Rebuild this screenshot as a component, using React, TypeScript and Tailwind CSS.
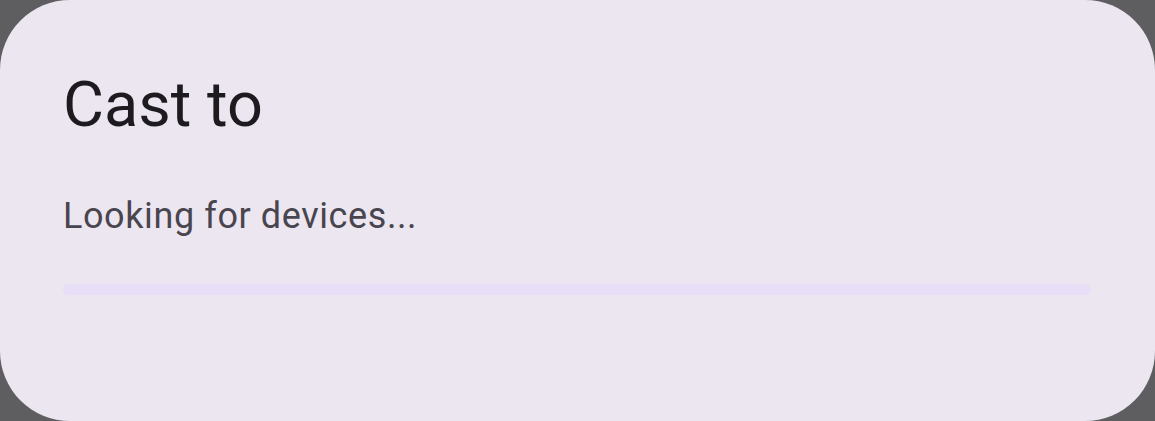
export default function App() {
  return (
    <div className="w-[1155px] h-[421px] bg-[#5e5d60] overflow-hidden" style={{ fontFamily: "Roboto, sans-serif" }}>
      <div className="w-full h-full bg-[#ece6f0] rounded-[70px] pl-[63px] pr-[64px] pt-[70px]">
        <h1 className="text-[63px] leading-[70px] text-[#1d1b20] font-normal">Cast to</h1>
        <p className="mt-[56px] text-[36px] leading-[40px] tracking-[0.6px] text-[#49454f]">Looking for devices...</p>
        <div className="mt-[48px] h-[11px] w-[1028px] rounded-full bg-[#e8def8]" />
      </div>
    </div>
  );
}
